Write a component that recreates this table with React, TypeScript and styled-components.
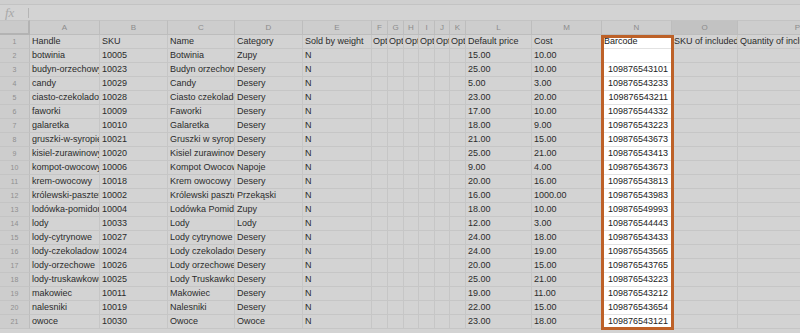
import React from "react";
import styled, { createGlobalStyle } from "styled-components";

type Align = "left" | "right";

interface Column {
    letter: string;
    width: number;
    align: Align;
}

const columns: Column[] = [
    { letter: "A", width: 70, align: "left" },
    { letter: "B", width: 68, align: "left" },
    { letter: "C", width: 67, align: "left" },
    { letter: "D", width: 68, align: "left" },
    { letter: "E", width: 69, align: "left" },
    { letter: "F", width: 16, align: "left" },
    { letter: "G", width: 16, align: "left" },
    { letter: "H", width: 15, align: "left" },
    { letter: "I", width: 16, align: "left" },
    { letter: "J", width: 15, align: "left" },
    { letter: "K", width: 16, align: "left" },
    { letter: "L", width: 66, align: "left" },
    { letter: "M", width: 70, align: "left" },
    { letter: "N", width: 70, align: "right" },
    { letter: "O", width: 66, align: "left" },
    { letter: "P", width: 120, align: "left" },
];

const ROW_NUM_WIDTH = 30;
const HIGHLIGHT = "N";
const SELECTED_HEADER = "O";

const headerRow = [
    "Handle", "SKU", "Name", "Category", "Sold by weight",
    "Opt", "Opt", "Opt", "Opt", "Opt", "Opt",
    "Default price", "Cost", "Barcode", "SKU of included", "Quantity of included",
];

// handle, sku, name, category, price, cost, barcode
const products: string[][] = [
    ["botwinia", "10005", "Botwinia", "Zupy", "15.00", "10.00", ""],
    ["budyn-orzechowy", "10023", "Budyn orzechowy", "Desery", "25.00", "10.00", "109876543101"],
    ["candy", "10029", "Candy", "Desery", "5.00", "3.00", "109876543233"],
    ["ciasto-czekoladowe", "10028", "Ciasto czekoladowe", "Desery", "23.00", "20.00", "109876543211"],
    ["faworki", "10009", "Faworki", "Desery", "17.00", "10.00", "109876544332"],
    ["galaretka", "10010", "Galaretka", "Desery", "18.00", "9.00", "109876543223"],
    ["gruszki-w-syropie", "10021", "Gruszki w syropie", "Desery", "21.00", "15.00", "109876543673"],
    ["kisiel-zurawinowy", "10020", "Kisiel zurawinowy", "Desery", "25.00", "21.00", "109876543413"],
    ["kompot-owocowy", "10006", "Kompot Owocowy", "Napoje", "9.00", "4.00", "109876543673"],
    ["krem-owocowy", "10018", "Krem owocowy", "Desery", "20.00", "16.00", "109876543813"],
    ["królewski-pasztet", "10002", "Królewski pasztet", "Przekąski", "16.00", "1000.00", "109876543983"],
    ["lodówka-pomidorowa", "10004", "Lodówka Pomidorowa", "Zupy", "18.00", "10.00", "109876549993"],
    ["lody", "10033", "Lody", "Lody", "12.00", "3.00", "109876544443"],
    ["lody-cytrynowe", "10027", "Lody cytrynowe", "Desery", "24.00", "18.00", "109876543433"],
    ["lody-czekoladowe", "10024", "Lody czekoladowe", "Desery", "24.00", "19.00", "109876543565"],
    ["lody-orzechowe", "10026", "Lody orzechowe", "Desery", "20.00", "15.00", "109876543765"],
    ["lody-truskawkowe", "10025", "Lody Truskawkowe", "Desery", "25.00", "21.00", "109876543223"],
    ["makowiec", "10011", "Makowiec", "Desery", "19.00", "11.00", "109876543212"],
    ["nalesniki", "10019", "Nalesniki", "Desery", "22.00", "15.00", "109876543654"],
    ["owoce", "10030", "Owoce", "Owoce", "23.00", "18.00", "109876543121"],
];

const rows: string[][] = [
    headerRow,
    ...products.map(([handle, sku, name, cat, price, cost, barcode]) => [
        handle, sku, name, cat, "N", "", "", "", "", "", "", price, cost, barcode, "", "",
    ]),
];

const highlightIndex = columns.findIndex((c) => c.letter === HIGHLIGHT);
const highlightLeft =
    ROW_NUM_WIDTH + columns.slice(0, highlightIndex).reduce((sum, c) => sum + c.width, 0);

const App: React.FC = () => {
    return (
        <>
            <GlobalStyle />
            <Page>
                <Toolbar />
                <FormulaBar>
                    <Fx>fx</Fx>
                    <FormulaDivider />
                </FormulaBar>
                <SheetArea>
                    <Grid $template={`${ROW_NUM_WIDTH}px ${columns.map((c) => c.width + "px").join(" ")}`}>
                        <Corner />
                        {columns.map((c) => (
                            <ColumnHeader key={c.letter} $selected={c.letter === SELECTED_HEADER}>
                                {c.letter}
                            </ColumnHeader>
                        ))}
                        {rows.map((row, r) => (
                            <React.Fragment key={r}>
                                <RowNumber>{r + 1}</RowNumber>
                                {row.map((value, c) => {
                                    const col = columns[c];
                                    return (
                                        <Cell
                                            key={c}
                                            $highlight={col.letter === HIGHLIGHT}
                                            $narrow={col.width < 20}
                                            $align={r === 0 ? "left" : col.align}
                                        >
                                            {value}
                                        </Cell>
                                    );
                                })}
                            </React.Fragment>
                        ))}
                    </Grid>
                    <HighlightBox style={{ left: highlightLeft - 1 }} />
                </SheetArea>
            </Page>
        </>
    );
};

export default App;

const GlobalStyle = createGlobalStyle`
    html, body {
        margin: 0;
        padding: 0;
        background: #d3d3d3;
        overflow: hidden;
    }
    * {
        box-sizing: border-box;
    }
`;

const Page = styled.div`
    width: 800px;
    height: 333px;
    overflow: hidden;
    font-family: "Liberation Sans", Arial, sans-serif;
    background: #d3d3d3;
`;

const Toolbar = styled.div`
    height: 5px;
    background: #cfcfcf;
    border-bottom: 1px solid #c3c3c3;
`;

const FormulaBar = styled.div`
    height: 15px;
    display: flex;
    align-items: center;
    background: #d3d3d3;
`;

const Fx = styled.span`
    width: 28px;
    padding-left: 5px;
    font-family: "Liberation Serif", serif;
    font-style: italic;
    font-size: 13px;
    line-height: 13px;
    color: #a8a8a8;
`;

const FormulaDivider = styled.div`
    width: 1px;
    height: 10px;
    background: #b5b5b5;
`;

const SheetArea = styled.div`
    position: relative;
`;

const Grid = styled.div<{ $template: string }>`
    display: grid;
    grid-template-columns: ${(p) => p.$template};
    grid-template-rows: 15px;
    grid-auto-rows: 14px;
`;

const Corner = styled.div`
    background: #cacaca;
    border-right: 2px solid #b3b3b3;
    border-bottom: 2px solid #b3b3b3;
    border-top: 1px solid #c3c3c3;
`;

const ColumnHeader = styled.div<{ $selected: boolean }>`
    display: flex;
    align-items: center;
    justify-content: center;
    font-size: 8px;
    color: #8c8c8c;
    background: ${(p) => (p.$selected ? "#c2c2c2" : "#cdcdcd")};
    border-top: 1px solid #c3c3c3;
    border-right: 1px solid #bdbdbd;
    border-bottom: 1px solid #bdbdbd;
`;

const RowNumber = styled.div`
    display: flex;
    align-items: center;
    justify-content: center;
    font-size: 7px;
    color: #8f8f8f;
    background: #cdcdcd;
    border-right: 1px solid #bdbdbd;
    border-bottom: 1px solid #c4c4c4;
`;

const Cell = styled.div<{ $highlight: boolean; $narrow: boolean; $align: Align }>`
    padding: 0 ${(p) => (p.$narrow ? "0 0 1px" : "3px 0 2px")};
    font-size: 9px;
    line-height: 13px;
    color: ${(p) => (p.$highlight ? "#222" : "#2b2b2b")};
    background: ${(p) => (p.$highlight ? "#ffffff" : "#d3d3d3")};
    border-right: 1px solid ${(p) => (p.$highlight ? "#e2e2e2" : "#c6c6c6")};
    border-bottom: 1px solid ${(p) => (p.$highlight ? "#e2e2e2" : "#c6c6c6")};
    text-align: ${(p) => p.$align};
    white-space: nowrap;
    overflow: hidden;
`;

const HighlightBox = styled.div`
    position: absolute;
    top: 15px;
    width: 73px;
    height: 295px;
    border: 3px solid #bd6128;
    pointer-events: none;
`;
